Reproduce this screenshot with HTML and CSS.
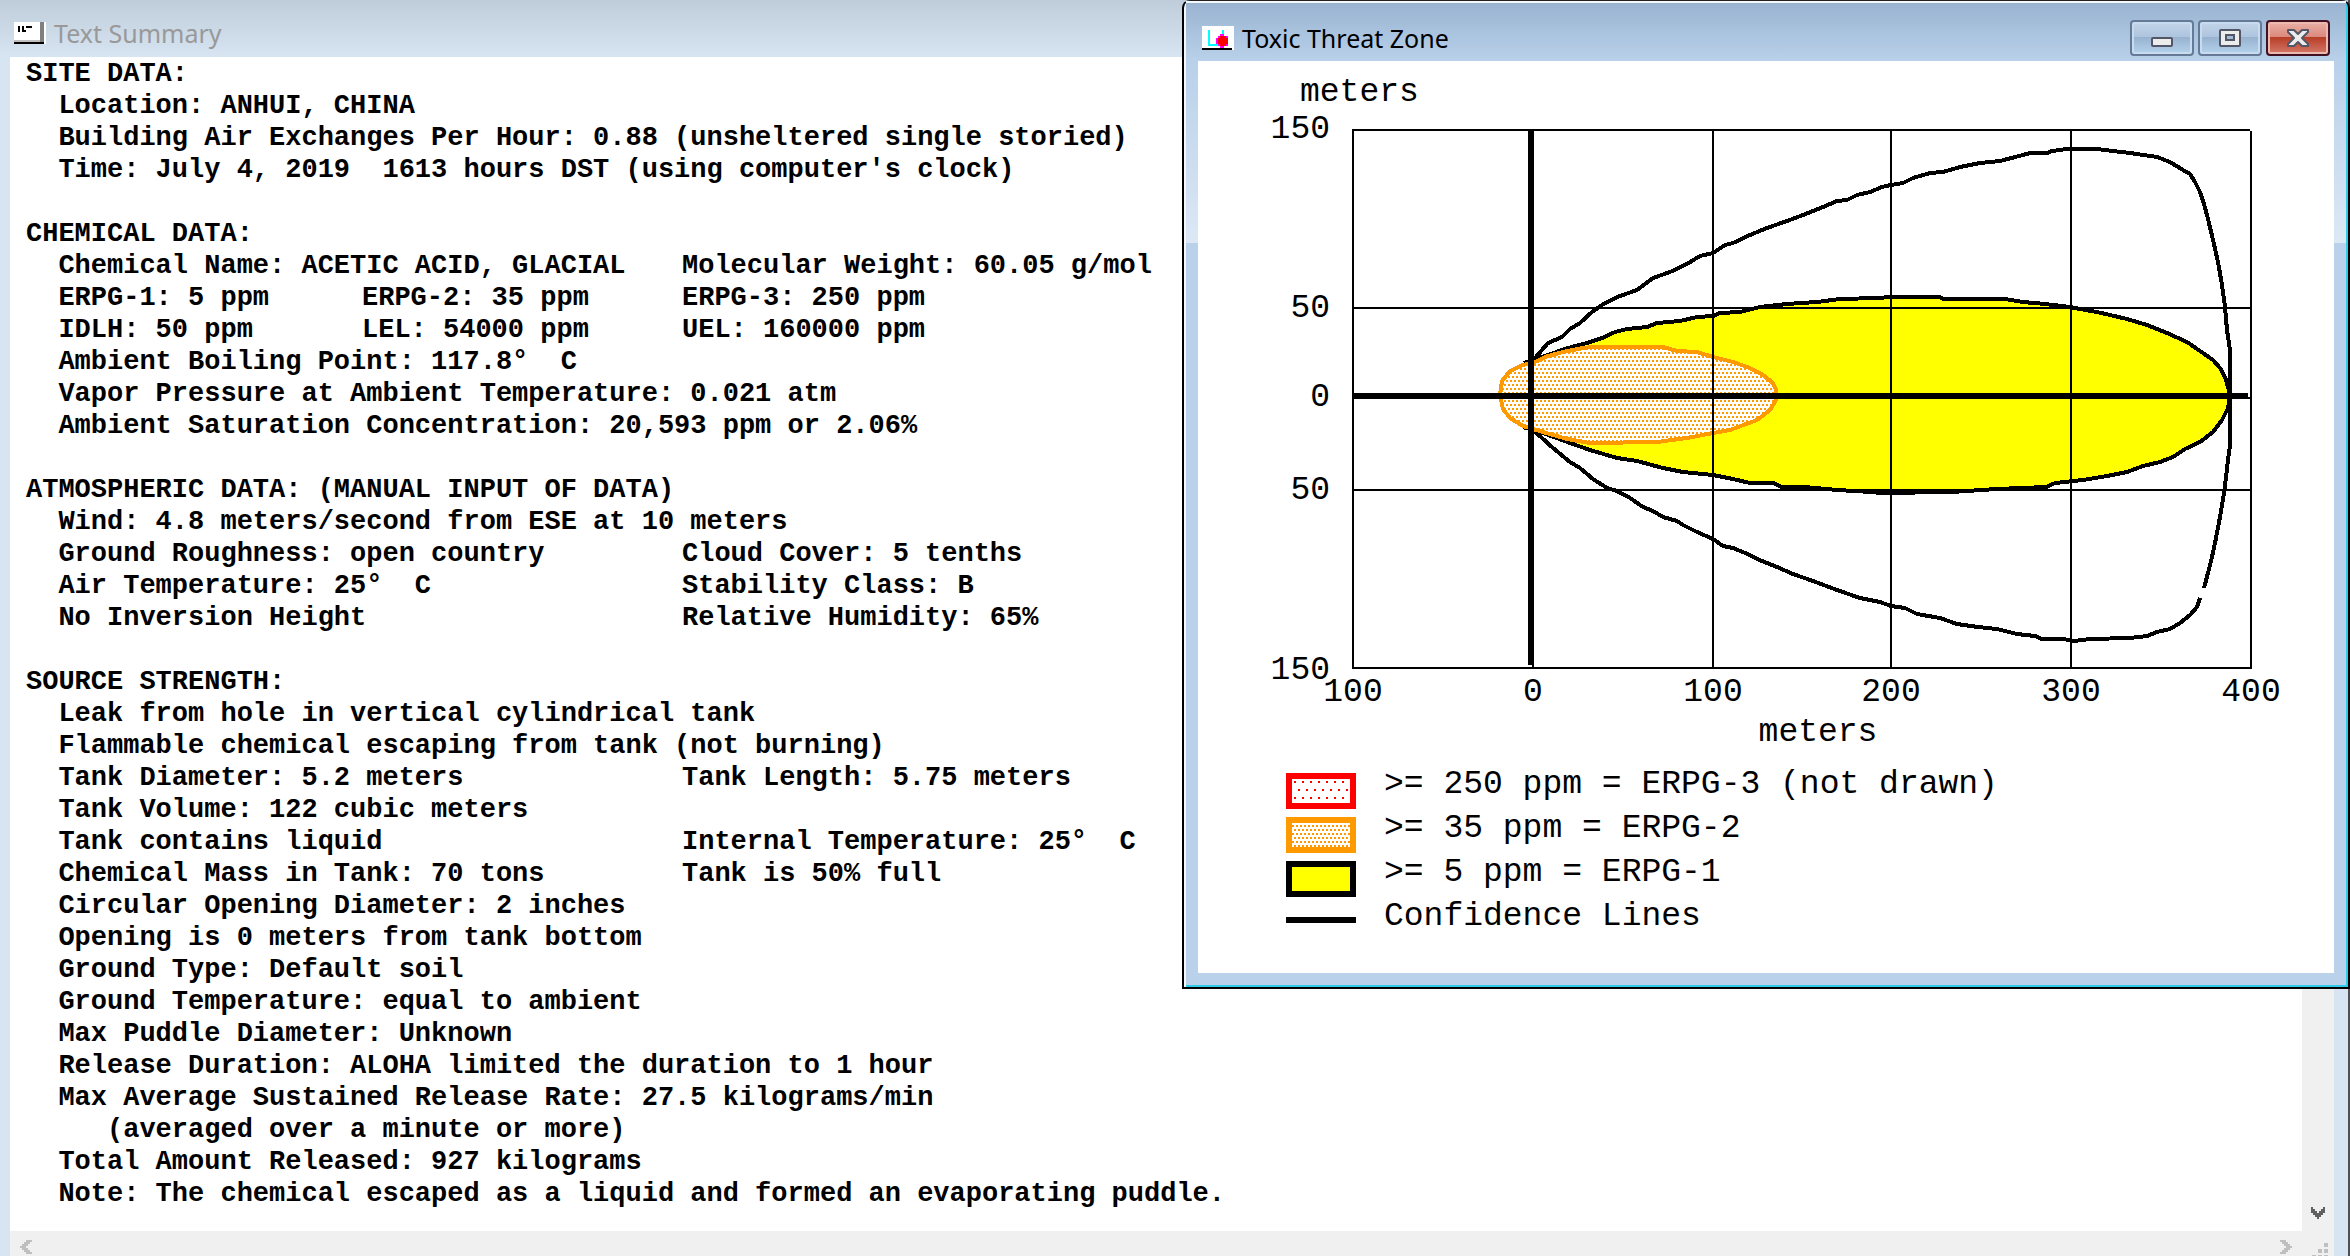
FILE: index.html
```html
<!DOCTYPE html>
<html lang="en">
<head>
<meta charset="utf-8">
<title>Text Summary</title>
<link rel="stylesheet" href="styles.css">
</head>
<body>
<main class="desktop">
  <section class="summary" aria-labelledby="summary-title">
    <header class="summary-bar">
      <svg class="summary-icon" viewBox="0 0 32 22" shape-rendering="crispEdges" aria-hidden="true">
        <path fill="#fff" d="M0 0h32v22H0z"/>
        <path fill="#808080" d="M26 0h4v20h-4z"/>
        <path fill="#c0c0c0" d="M0 18h26v2H0z"/>
        <path fill="#000" d="M0 20h30v2H0zM4 4h2v6H4zM8 4h2v6H8zM10 8h2v2h-2zM12 4h2v2h-2zM14 4h4v2h-4z"/>
      </svg>
      <h1 class="summary-title" id="summary-title">Text Summary</h1>
    </header>
    <div class="summary-body">
      <div class="report">
<pre class="block">SITE DATA:
  Location: ANHUI, CHINA
  Building Air Exchanges Per Hour: 0.88 (unsheltered single storied)
  Time: July 4, 2019  1613 hours DST (using computer's clock)</pre>
<pre class="block">CHEMICAL DATA:
<span class="half">  Chemical Name: ACETIC ACID, GLACIAL</span>Molecular Weight: 60.05 g/mol
<span class="first">  ERPG-1: 5 ppm</span><span class="second">ERPG-2: 35 ppm</span>ERPG-3: 250 ppm
<span class="first">  IDLH: 50 ppm</span><span class="second">LEL: 54000 ppm</span>UEL: 160000 ppm
  Ambient Boiling Point: 117.8°  C
  Vapor Pressure at Ambient Temperature: 0.021 atm
  Ambient Saturation Concentration: 20,593 ppm or 2.06%</pre>
<pre class="block">ATMOSPHERIC DATA: (MANUAL INPUT OF DATA)
  Wind: 4.8 meters/second from ESE at 10 meters
<span class="half">  Ground Roughness: open country</span>Cloud Cover: 5 tenths
<span class="half">  Air Temperature: 25°  C</span>Stability Class: B
<span class="half">  No Inversion Height</span>Relative Humidity: 65%</pre>
<pre class="block">SOURCE STRENGTH:
  Leak from hole in vertical cylindrical tank
  Flammable chemical escaping from tank (not burning)
<span class="half">  Tank Diameter: 5.2 meters</span>Tank Length: 5.75 meters
  Tank Volume: 122 cubic meters
<span class="half">  Tank contains liquid</span>Internal Temperature: 25°  C
<span class="half">  Chemical Mass in Tank: 70 tons</span>Tank is 50% full
  Circular Opening Diameter: 2 inches
  Opening is 0 meters from tank bottom
  Ground Type: Default soil
  Ground Temperature: equal to ambient
  Max Puddle Diameter: Unknown
  Release Duration: ALOHA limited the duration to 1 hour
  Max Average Sustained Release Rate: 27.5 kilograms/min
     (averaged over a minute or more)
  Total Amount Released: 927 kilograms
  Note: The chemical escaped as a liquid and formed an evaporating puddle.</pre>
      </div>
      <div class="scroll-v">
        <button class="scroll-button" type="button" aria-label="Scroll down">
          <svg width="14" height="12" viewBox="0 0 14 12" shape-rendering="crispEdges"><path fill="#606060" d="M0 0h2v2h2v2h2v2h2V4h2V2h2V0h2v6h-2v2h-2v2H8v2H6v-2H4V8H2V6H0z"/></svg>
        </button>
      </div>
    </div>
    <div class="scroll-h">
      <button class="scroll-button" type="button" aria-label="Scroll left">
        <svg width="12" height="14" viewBox="0 0 12 14" shape-rendering="crispEdges"><path fill="#bfbfbf" d="M12 0v2h-2v2H8v2H6v2h2v2h2v2h2v2H6v-2H4v-2H2V8H0V6h2V4h2V2h2V0z"/></svg>
      </button>
      <button class="scroll-button" type="button" aria-label="Scroll right">
        <svg width="12" height="14" viewBox="0 0 12 14" shape-rendering="crispEdges"><path fill="#bfbfbf" d="M0 0v2h2v2h2v2h2v2H4v2H2v2H0v2h6v-2h2v-2h2V8h2V6h-2V4H8V2H6V0z"/></svg>
      </button>
      <svg class="grip" viewBox="0 0 32 32" shape-rendering="crispEdges" aria-hidden="true"><path fill="#bfbfbf" d="M22 12h4v4h-4zM16 18h4v4h-4zM22 18h4v4h-4zM10 24h4v4h-4zM16 24h4v4h-4zM22 24h4v4h-4z"/></svg>
    </div>
  </section>

  <section class="zone" aria-labelledby="zone-title">
    <header class="zone-bar">
      <svg class="zone-icon" viewBox="0 0 32 24" shape-rendering="crispEdges" aria-hidden="true">
        <path fill="#fff" d="M0 0h32v24H0z"/>
        <path fill="#0ff" d="M6 4h2v14h8v2H6zM20 4h2v4h-2z"/>
        <path fill="#f0f" d="M18 8h4v2h4v2h-4zM16 10h10v10H16zM14 12h2v6h-2zM18 8h4v14h-4z"/>
        <path fill="#f00" d="M18 10h6v2h2v6h-2v2h-6v-2h-2v-6h2z"/>
        <path fill="#000" d="M0 22h30v2H0z"/>
      </svg>
      <h2 class="zone-title" id="zone-title">Toxic Threat Zone</h2>
      <div class="zone-controls">
        <button class="control" type="button" aria-label="Minimize">
          <svg width="26" height="22" viewBox="0 0 26 22"><rect x="3" y="11" width="20" height="8" rx="1" fill="#ececec" stroke="#535666" stroke-width="2"/></svg>
        </button>
        <button class="control" type="button" aria-label="Maximize">
          <svg width="26" height="22" viewBox="0 0 26 22"><rect x="3" y="3" width="20" height="16" rx="1" fill="#ececec" stroke="#535666" stroke-width="2"/><rect x="9" y="8" width="8" height="5" fill="#9fb9d6" stroke="#535666" stroke-width="2"/></svg>
        </button>
        <button class="control control-close" type="button" aria-label="Close">
          <svg width="26" height="22" viewBox="0 0 26 22"><path fill="#ececec" stroke="#535666" stroke-width="2" stroke-linejoin="round" d="M3 3h6l4 4 4-4h6v2l-6 6 6 6v2h-6l-4-4-4 4H3v-2l6-6-6-6z"/></svg>
        </button>
      </div>
    </header>
    <div class="zone-body">
      <svg class="chart" viewBox="1198 61 1136 702" role="img" aria-label="Toxic threat zone, distances in meters">
        <defs>
          <pattern id="orange-dots" width="4" height="8" patternUnits="userSpaceOnUse">
            <path fill="#fff" d="M0 0h4v8H0z"/>
            <path fill="#f90" d="M0 0h2v2H0zM2 4h2v2H2z"/>
          </pattern>
        </defs>
        <g shape-rendering="crispEdges" fill="none" stroke="#000" stroke-width="4">
          <polygon fill="#ff0" stroke="none" points="1568,348 1587,343 1605,337 1615,332 1627,329 1647,327 1657,323 1680,321 1697,317 1713,316 1720,313 1740,312 1760,307 1787,304 1817,302 1840,299 1878,298 1891,297 1940,297 1943,299 2005,299 2023,302 2045,304 2070,307 2080,309 2097,312 2127,319 2147,325 2167,333 2187,342 2200,351 2213,360 2220,368 2225,377 2228,387 2230,396 2228,408 2222,420 2213,432 2200,442 2185,449 2173,457 2160,462 2143,466 2127,472 2107,476 2083,480 2055,483 2047,487 1997,489 1952,492 1880,493 1872,492 1837,490 1805,487 1782,487 1773,483 1750,483 1733,479 1713,475 1683,472 1663,468 1637,461 1617,458 1590,450 1570,443"/>
          <polyline points="1524,363 1533,360 1568,348 1587,343 1605,337 1615,332 1627,329 1647,327 1657,323 1680,321 1697,317 1713,316 1720,313 1740,312 1760,307 1787,304 1817,302 1840,299 1878,298 1891,297 1940,297 1943,299 2005,299 2023,302 2045,304 2070,307 2080,309 2097,312 2127,319 2147,325 2167,333 2187,342 2200,351 2213,360 2220,368 2225,377 2228,387 2230,396 2228,408 2222,420 2213,432 2200,442 2185,449 2173,457 2160,462 2143,466 2127,472 2107,476 2083,480 2055,483 2047,487 1997,489 1952,492 1880,493 1872,492 1837,490 1805,487 1782,487 1773,483 1750,483 1733,479 1713,475 1683,472 1663,468 1637,461 1617,458 1590,450 1570,443 1543,433 1523,427"/>
          <polyline points="1533,360 1536,357 1548,343 1562,337 1570,329 1580,323 1592,312 1602,305 1620,296 1637,290 1653,278 1670,272 1687,264 1700,256 1713,253 1725,245 1733,243 1750,235 1767,228 1787,221 1803,215 1823,207 1837,201 1847,200 1857,195 1870,192 1882,187 1891,185 1903,183 1913,178 1930,173 1943,172 1960,167 1980,163 2000,161 2023,155 2030,153 2047,153 2052,151 2067,149 2097,149 2113,151 2130,153 2157,157 2170,162 2183,170 2190,174 2195,182 2200,192 2204,204 2208,219 2213,240 2218,262 2222,285 2225,307 2227,330 2230,350 2230,396 2230,445 2228,460 2226,477 2224,493 2220,517 2216,538 2212,557 2208,573 2204,588"/>
          <polyline points="2200,598 2197,607 2190,615 2180,623 2170,629 2157,632 2147,636 2130,638 2090,639 2074,641 2063,639 2042,639 2035,636 2017,634 1997,629 1978,627 1957,624 1940,618 1917,614 1905,608 1891,606 1880,602 1860,598 1837,590 1813,581 1793,574 1777,567 1757,559 1750,555 1733,548 1723,546 1713,539 1697,532 1683,525 1677,521 1663,517 1653,511 1643,507 1630,498 1617,491 1607,488 1593,479 1580,468 1570,462 1553,448 1531,428"/>
          <polygon fill="url(#orange-dots)" stroke="#f90" points="1500,395 1502,381 1510,371 1523,365 1535,362 1548,356 1563,352 1583,348 1593,347 1663,347 1677,351 1697,352 1713,357 1733,362 1750,368 1763,375 1773,383 1776,390 1776,400 1770,410 1757,420 1730,430 1713,433 1687,438 1657,442 1590,443 1567,439 1543,432 1523,426 1510,418 1503,409"/>
          <path stroke-width="2" d="M1353 129V669M1533 129V669M1713 129V669M1891 129V669M2071 129V669M2251 131V669M1352 130H2250M1352 308H2250M1352 398H2250M1352 490H2250M1352 668H2250"/>
          <path stroke-width="6" d="M1531 131V665M1353 396H2248"/>
        </g>
        <g class="chart-text">
          <text x="1300" y="101">meters</text>
          <g text-anchor="end">
            <text x="1330" y="138">150</text>
            <text x="1330" y="317">50</text>
            <text x="1330" y="406">0</text>
            <text x="1330" y="499">50</text>
            <text x="1330" y="679">150</text>
          </g>
          <g text-anchor="middle">
            <text x="1353" y="701">100</text>
            <text x="1533" y="701">0</text>
            <text x="1713" y="701">100</text>
            <text x="1891" y="701">200</text>
            <text x="2071" y="701">300</text>
            <text x="2251" y="701">400</text>
            <text x="1818" y="741">meters</text>
          </g>
        </g>
      </svg>
      <ul class="legend">
        <li class="legend-row">
          <svg class="swatch swatch-red" viewBox="0 0 58 24" shape-rendering="crispEdges" aria-hidden="true">
            <defs><pattern id="red-dots" width="8" height="16" patternUnits="userSpaceOnUse"><path fill="#f00" d="M2 2h2v2H2zM6 10h2v2H6z"/></pattern></defs>
            <path fill="url(#red-dots)" d="M0 0h58v24H0z"/>
          </svg>
          &gt;= 250 ppm = ERPG-3 (not drawn)
        </li>
        <li class="legend-row">
          <svg class="swatch swatch-orange" viewBox="0 0 58 24" shape-rendering="crispEdges" aria-hidden="true">
            <defs><pattern id="swatch-dots" width="4" height="8" patternUnits="userSpaceOnUse"><path fill="#f90" d="M0 2h2v2H0zM2 6h2v2H2z"/></pattern></defs>
            <path fill="url(#swatch-dots)" d="M0 0h58v24H0z"/>
          </svg>
          &gt;= 35 ppm = ERPG-2
        </li>
        <li class="legend-row"><span class="swatch swatch-yellow"></span>&gt;= 5 ppm = ERPG-1</li>
        <li class="legend-row"><span class="swatch-line"></span>Confidence Lines</li>
      </ul>
    </div>
  </section>
</main>
</body>
</html>
```
FILE: styles.css
```css
* {
  box-sizing: border-box;
}

body {
  margin: 0;
  background: #d7e4f2;
  color: #000;
}

button {
  padding: 0;
  border: 0;
  background: none;
}

.desktop {
  position: relative;
  height: 100vh;
  overflow: hidden;
}

/* Text Summary window */

.summary {
  display: flex;
  flex-direction: column;
  border-right: 2px solid #505054;
}

.summary-bar {
  display: flex;
  align-items: center;
  gap: 8px;
  height: 57px;
  padding: 8px 14px 0;
  background: linear-gradient(#bfccda, #d7e4f2);
}

.summary-icon {
  width: 32px;
  height: 22px;
}

.summary-title,
.zone-title {
  margin: 0;
  font: 400 25px/34px "Noto Sans", "Open Sans", sans-serif;
}

.summary-title {
  color: #999;
}

.summary-body,
.scroll-h {
  margin: 0 14px 0 10px;
}

.summary-body {
  display: flex;
  background: #fff;
}

.report {
  flex: 1;
  padding: 1px 16px 21px;
}

.block {
  margin: 0 0 32px;
  font: 700 27px/32px "Liberation Mono", monospace;
}

.block:last-child {
  margin-bottom: 0;
}

/* Columns inside a report line */

.half,
.first,
.second {
  display: inline-block;
  vertical-align: top;
}

.half {
  width: 656px;
}

.first {
  width: 336px;
}

.second {
  width: 320px;
}

.scroll-v {
  display: flex;
  align-items: flex-end;
  width: 32px;
  background: #f0f0f0;
}

.scroll-h {
  display: flex;
  height: 32px;
  background: #f0f0f0;
}

.scroll-button {
  display: flex;
  align-items: center;
  justify-content: center;
  width: 32px;
  height: 32px;
}

.scroll-v .scroll-button {
  height: 36px;
}

.scroll-h .scroll-button:first-child {
  margin-right: auto;
}

.grip {
  width: 32px;
  height: 32px;
}

/* Toxic Threat Zone window */

.zone {
  position: absolute;
  top: 0;
  left: 1182px;
  right: 0;
  padding: 0 14px 14px;
  border: 2px solid #000;
  border-top: 1px solid #222;
  border-radius: 8px 8px 0 0;
  background: linear-gradient(#b9d0ea 61px, #dce8f5 242px, #b9d1ea 242px);
  box-shadow: inset 2px 2px #f4f8fc, inset -2px -2px #2fcbe8;
}

.zone-bar {
  display: flex;
  align-items: center;
  height: 60px;
  margin: 0 -12px;
  padding: 11px 16px 0;
  border-top: 2px solid #f4f8fc;
  background: linear-gradient(#99b4d1, #b9d1ea);
}

.zone-icon {
  width: 32px;
  height: 24px;
}

.zone-title {
  margin-left: 8px;
}

.zone-controls {
  display: flex;
  gap: 4px;
  margin-left: auto;
}

.control {
  display: flex;
  align-items: center;
  justify-content: center;
  width: 64px;
  height: 36px;
  border: 2px solid #647a96;
  border-radius: 4px;
  background: linear-gradient(#c3d4e8, #aec5df 46%, #97b1cf 46%, #b5d3ec);
  box-shadow: inset 0 0 0 2px #c9dbee;
}

.control-close {
  border-color: #431222;
  background: linear-gradient(#e9b0a6, #dc8a7e 46%, #b63c24 46%, #d4796a);
  box-shadow: inset 0 0 0 2px #ecb9af;
}

.zone-body {
  background: #fff;
}

.chart {
  display: block;
  width: 100%;
}

.chart-text,
.legend {
  font: 400 33px/44px "Liberation Mono", monospace;
}

.legend {
  margin: 0;
  padding: 0 0 34px 88px;
  list-style: none;
}

.legend-row {
  display: flex;
  align-items: flex-start;
  gap: 28px;
  height: 44px;
}

.swatch {
  width: 70px;
  height: 36px;
  margin-top: 10px;
  border: 6px solid #000;
}

.swatch-red {
  border-color: #f00;
}

.swatch-orange {
  border-color: #f90;
}

.swatch-yellow {
  background: #ff0;
}

.swatch-line {
  width: 70px;
  height: 6px;
  margin-top: 22px;
  background: #000;
}
```
